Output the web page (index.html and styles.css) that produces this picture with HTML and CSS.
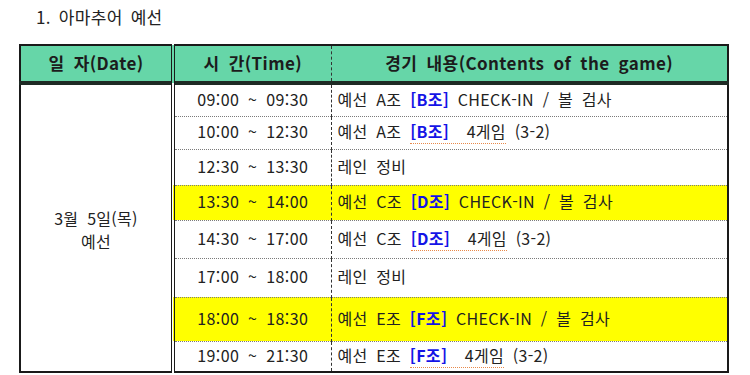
FILE: index.html
```html
<!DOCTYPE html>
<html lang="ko">
<head>
<meta charset="utf-8">
<link rel="stylesheet" href="styles.css">
</head>
<body>
<h1 class="title">1. 아마추어 예선</h1>
<table class="sched">
  <colgroup><col class="c-date"><col class="c-time"><col class="c-cont"></colgroup>
  <thead>
    <tr><th class="date">일 자(Date)</th><th class="time">시 간(Time)</th><th class="cont">경기 내용(Contents of the game)</th></tr>
  </thead>
  <tbody>
    <tr class="r1"><td class="date" rowspan="8">3월 5일(목)<br>예선</td><td class="time">09:00 ~ 09:30</td><td class="cont">예선 A조 <b class="grp">[B조]</b> CHECK-IN / 볼 검사</td></tr>
    <tr class="r2"><td class="time">10:00 ~ 12:30</td><td class="cont">예선 A조 <span class="spell"><b class="grp">[B조]</b>&nbsp; 4게임</span> (3-2)</td></tr>
    <tr class="r3"><td class="time">12:30 ~ 13:30</td><td class="cont">레인 정비</td></tr>
    <tr class="r4 hl"><td class="time">13:30 ~ 14:00</td><td class="cont">예선 C조 <b class="grp">[D조]</b> CHECK-IN / 볼 검사</td></tr>
    <tr class="r5"><td class="time">14:30 ~ 17:00</td><td class="cont">예선 C조 <span class="spell"><b class="grp">[D조]</b>&nbsp; 4게임</span> (3-2)</td></tr>
    <tr class="r6"><td class="time">17:00 ~ 18:00</td><td class="cont">레인 정비</td></tr>
    <tr class="r7 hl"><td class="time">18:00 ~ 18:30</td><td class="cont">예선 E조 <b class="grp">[F조]</b> CHECK-IN / 볼 검사</td></tr>
    <tr class="r8"><td class="time">19:00 ~ 21:30</td><td class="cont">예선 E조 <span class="spell"><b class="grp">[F조]</b>&nbsp; 4게임</span> (3-2)</td></tr>
  </tbody>
</table>
</body>
</html>
```

FILE: styles.css
```css
html, body {
  margin: 0;
  padding: 0;
  background: #ffffff;
}
body {
  font-family: "Noto Sans CJK KR", "Noto Sans", sans-serif;
  color: #222222;
  font-size: 16px;
  padding: 0 0 0 19px;
  overflow: hidden;
  height: 375px;
}
.title {
  margin: 0 0 0 17px;
  padding-top: 6px;
  height: 44px;
  box-sizing: border-box;
  font-size: 17px;
  font-weight: normal;
  line-height: 22px;
  word-spacing: 3px;
  letter-spacing: 0.3px;
}
.sched {
  border-collapse: collapse;
  table-layout: fixed;
  width: 708px;
  border: 2px solid #1a1a1a;
}
.c-date { width: 153px; }
.c-time { width: 158px; }
.c-cont { width: 397px; }
.sched th {
  background: #66d6a8;
  height: 32px;
  padding: 0 0 3px 0;
  font-weight: bold;
  font-size: 17px;
  color: #1c1c1c;
  border-bottom: 4px solid #1e2a24;
  letter-spacing: 0.4px;
  word-spacing: 4px;
}
.sched td {
  padding: 0 0 3px 0;
  border-top: 1px dotted #7a7a7a;
  line-height: 20px;
  word-spacing: 4px;
}
.sched .date {
  border-right: 4px double #1a1a1a;
  text-align: center;
}
.sched td.date {
  vertical-align: middle;
  line-height: 23px;
  border-top: none;
  padding: 4px 0 0 0;
  letter-spacing: 0.3px;
}
.sched .time {
  text-align: center;
  border-right: 1px dashed #333333;
  letter-spacing: 0.4px;
}
.sched td.cont {
  padding-left: 6px;
  letter-spacing: 0.3px;
}
.sched tbody tr:first-child td { border-top: none; }
.r1 { height: 33px; }
.r2 { height: 33px; }
.r3 { height: 36px; }
.r4 { height: 35px; }
.r5 { height: 38px; }
.r6 { height: 39px; }
.r7 { height: 44px; }
.r8 { height: 31px; }
.hl td.time, .hl td.cont { background: #ffff00; }
.grp {
  color: #1414e6;
  font-weight: bold;
}
.spell {
  border-bottom: 1px dotted #e8894a;
}
```
